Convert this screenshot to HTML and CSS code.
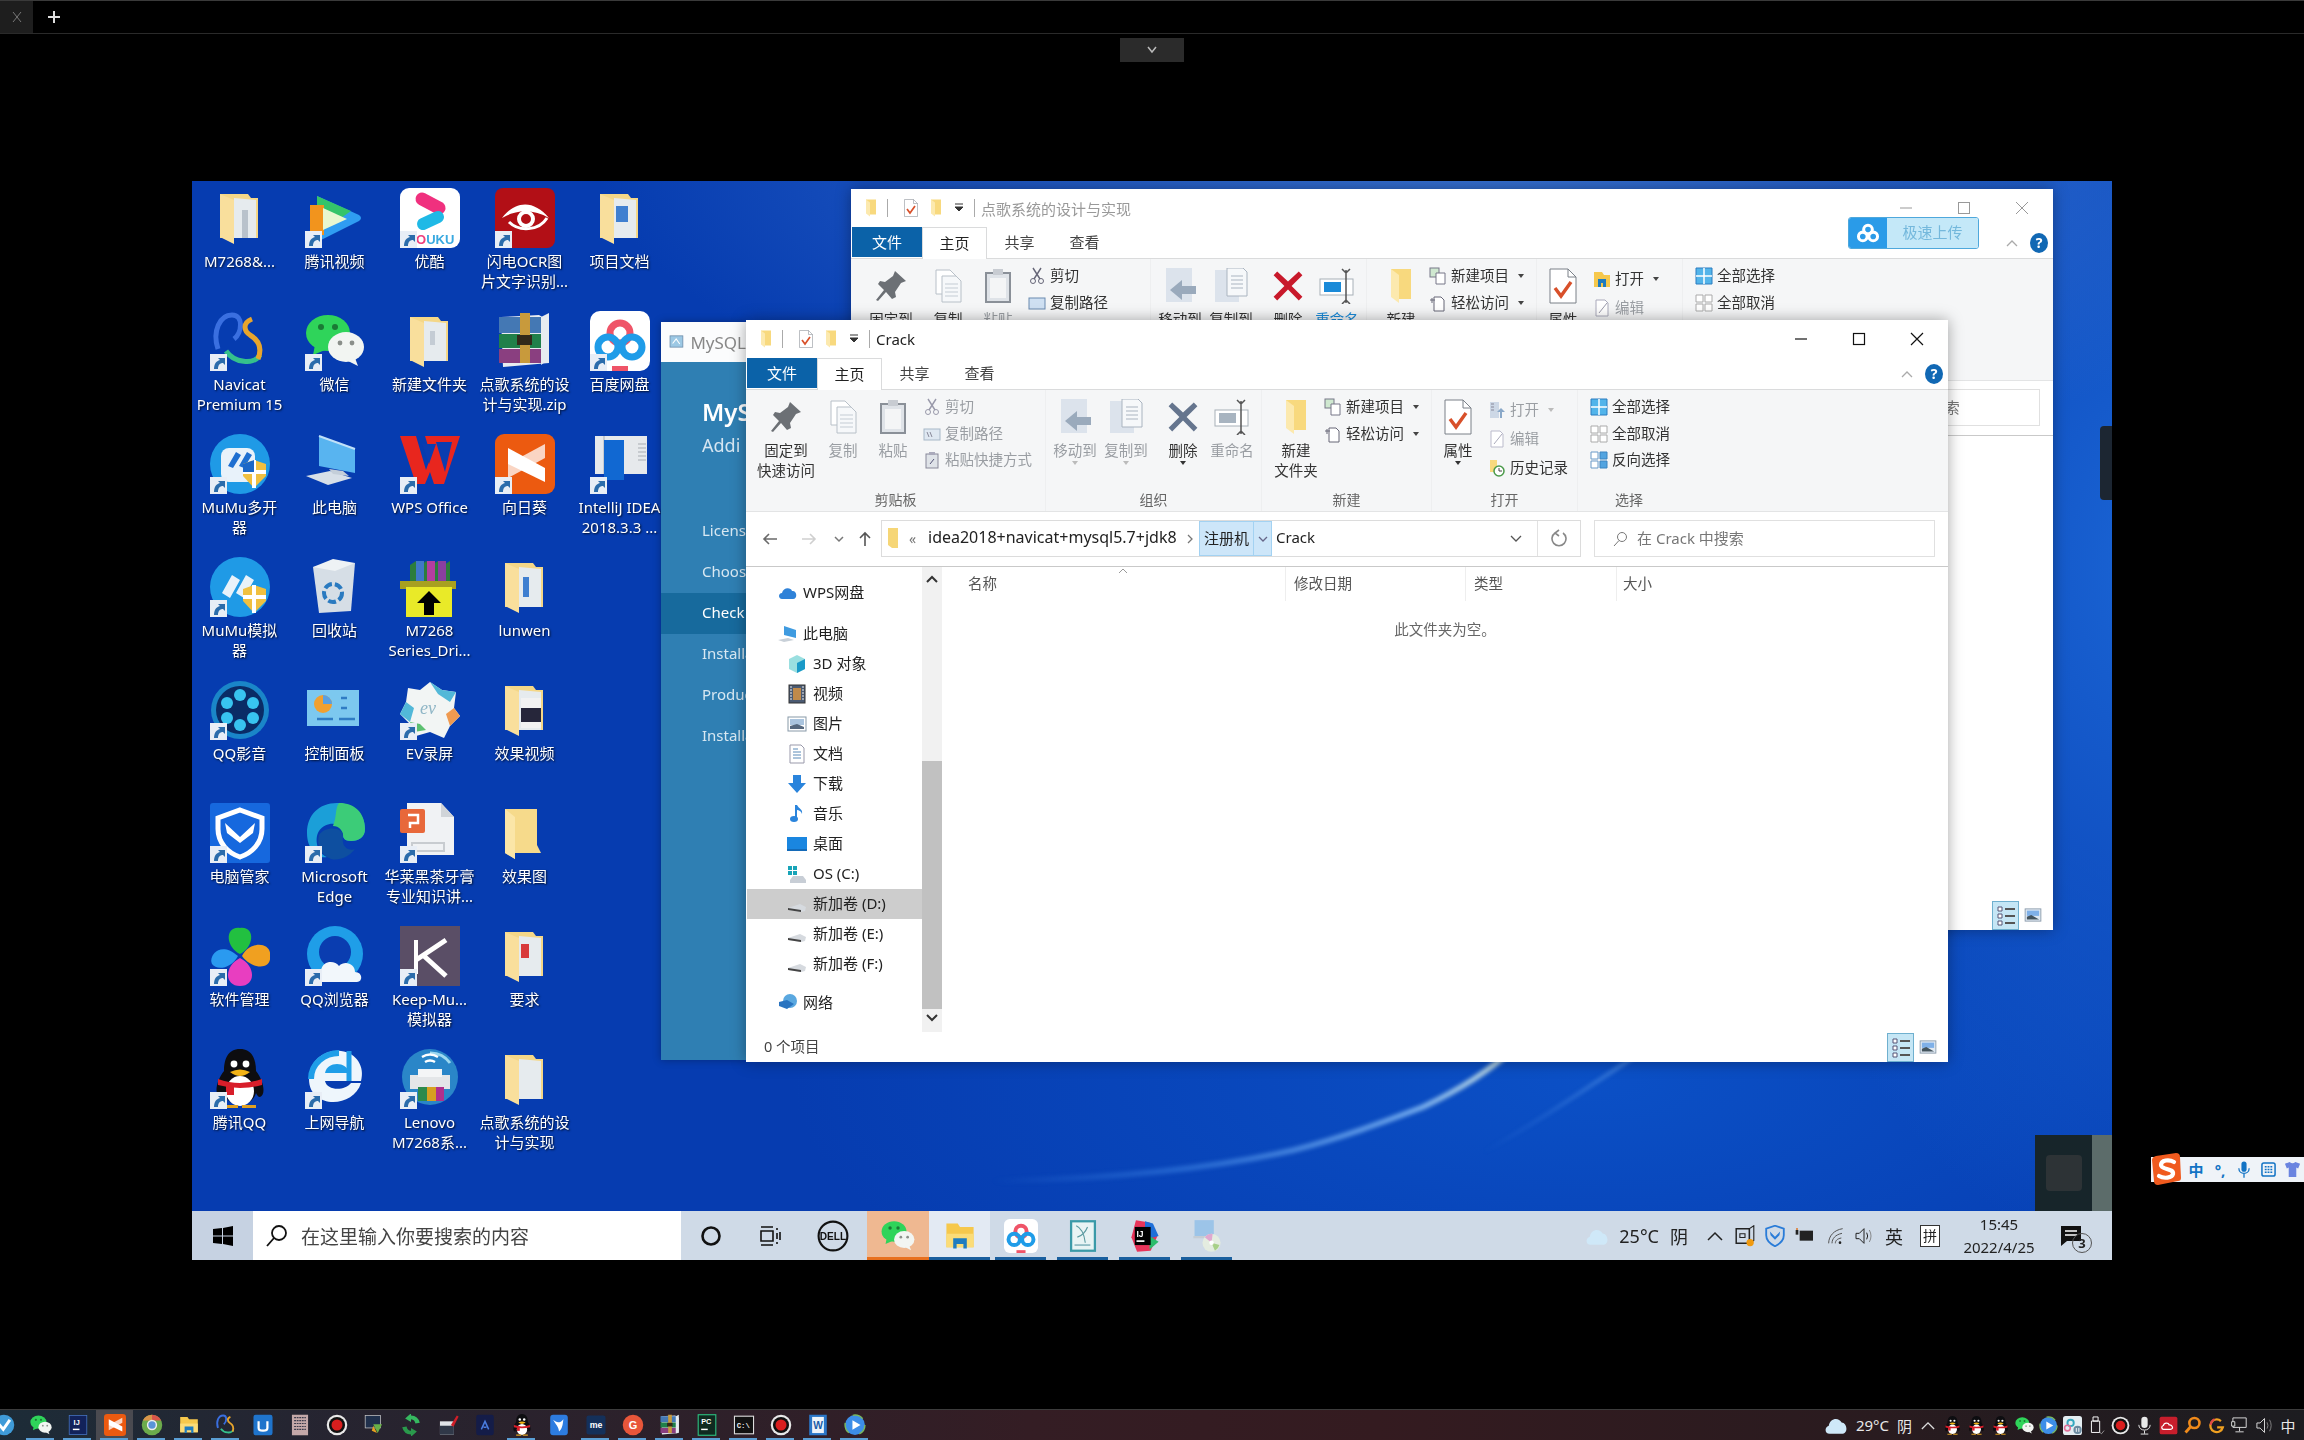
FILE: index.html
```html
<!DOCTYPE html>
<html lang="zh-CN">
<head>
    <meta charset="UTF-8">
    <title>远程桌面</title>
    <link rel="stylesheet" href="styles.css">
</head>
<body>
<svg class="sprite" width="0" height="0">
    <defs>
        <linearGradient id="streak-a" x1="0" x2="1" y1="0" y2="0">
            <stop offset="0" stop-color="#3f86e6" stop-opacity="0"/>
            <stop offset=".35" stop-color="#3f86e6" stop-opacity=".55"/>
            <stop offset=".8" stop-color="#7db4f2"/>
            <stop offset="1" stop-color="#dff0e0"/>
        </linearGradient>
        <linearGradient id="streak-b" x1="0" x2="1" y1="0" y2="0">
            <stop offset="0" stop-color="#3f86e6" stop-opacity="0"/>
            <stop offset="1" stop-color="#6ea8ee"/>
        </linearGradient>

        <!-- atalho -->
        <g id="sc"><rect width="17" height="17" fill="#e8eef6"/><path d="M4 15c0-5 2-8 6-9L8 4h7v7l-2-2c-3 0-5 2-5 6z" fill="#2b6cab"/></g>

        <!-- pastas -->
        <g id="i-folder"><path d="M10 6h32v36l4 8H20v6L10 50z" fill="#f6da8b"/><path d="M10 6l10 8v42l-10-6z" fill="#fbe6a8"/></g>
        <g id="i-folderdoc"><path d="M10 6h28l3 4h7v40H10z" fill="#f4d788"/><path d="M24 10l22 2v38H24z" fill="#e6ebee"/><path d="M10 6l14 6v44l-14-7z" fill="#f9df9c"/></g>

        <!-- apps -->
        <g id="i-tvideo"><path d="M12 8 54 27q4 3 0 6L12 54z" fill="#2f9df2"/><path d="M12 8l34 15-10 7-24-8z" fill="#35c46a"/><path d="M5 17h14v30H5z" fill="#f2941d"/><path d="M18 20l24 11-24 11z" fill="#e8f7d0"/></g>
        <g id="i-youku"><rect width="60" height="60" rx="9" fill="#fff"/><path d="M22 11l17 9" stroke="#f0307e" stroke-width="13" stroke-linecap="round"/><path d="M38 29l-15 7" stroke="#1fb9e6" stroke-width="12" stroke-linecap="round"/><text x="16" y="56" font-size="13" font-weight="700" fill="#ef3f7c" font-family="Liberation Sans">O<tspan fill="#39a9e0">UKU</tspan></text></g>
        <g id="i-ocr"><rect width="60" height="60" rx="8" fill="#b20f16"/><path d="M7 30c14-18 32-18 47 0-15-9-32-9-47 0z" fill="#fff"/><path d="M52 30c-8 13-28 14-38 4" stroke="#fff" stroke-width="3" fill="none"/><circle cx="31" cy="31" r="7" fill="none" stroke="#fff" stroke-width="4"/></g>
        <g id="i-navicat" fill="none" stroke-width="5"><path d="M8 38C2 20 10 4 22 4s10 18 2 24" stroke="#3a6fe0"/><path d="M16 40c8 12 28 14 34 4" stroke="#35c08c"/><path d="M42 8c-10 4-8 12-2 16 10 6 12 14 8 24" stroke="#e8a52c"/></g>
        <g id="i-wechat"><ellipse cx="23" cy="22" rx="22" ry="18" fill="#2fd45a"/><path d="M10 34l-2 10 12-5z" fill="#2fd45a"/><ellipse cx="41" cy="36" rx="18" ry="15" fill="#f2f5f2"/><path d="M50 47l3 8-10-5z" fill="#f2f5f2"/><circle cx="16" cy="16" r="3" fill="#1a7a35"/><circle cx="30" cy="16" r="3" fill="#1a7a35"/><circle cx="35" cy="32" r="2.4" fill="#8a8f8a"/><circle cx="47" cy="32" r="2.4" fill="#8a8f8a"/></g>
        <g id="i-rar"><path d="M6 6l38-2 10 6v42L8 56z" fill="#e8ecf0"/><path d="M4 6h42v16H4z" fill="#4478b4"/><path d="M4 23h42v14H4z" fill="#20804a"/><path d="M4 38h42v14H4z" fill="#8a3f80"/><path d="M46 6l8-4v46l-8 6z" fill="#e8ecf0"/><path d="M25 2h10v50H25z" fill="#c89a3c"/><path d="M22 24h15v10H22z" fill="#33291a"/></g>
        <g id="i-baidu"><rect width="60" height="60" rx="10" fill="#fff"/><g fill="none" stroke-width="7"><circle cx="30" cy="22" r="10" stroke="#ef5468"/><circle cx="18" cy="36" r="10" stroke="#1f9ce8"/><circle cx="42" cy="36" r="10" stroke="#1f9ce8"/></g><path d="M22 55h16v5H22z" fill="#ef5468"/></g>
        <g id="i-mumu"><circle cx="30" cy="30" r="30" fill="#1f9ae6"/><rect x="11" y="14" width="34" height="34" rx="8" fill="#e8f2fa"/><path d="M18 32l8-14 5 3-8 13zM29 32l8-14 5 3-8 13z" fill="#1e6fd0"/><path d="M33 30l11-4 12 4v12l-12 12-11-12z" fill="#f0c040"/><path d="M44 26v28M33 38h23" stroke="#fff" stroke-width="4"/><path d="M33 30l11-4v12H33z" fill="#1b67c8"/></g>
        <g id="i-mumu2"><circle cx="30" cy="30" r="30" fill="#1f9ae6"/><path d="M12 36l10-18 8 5-10 18zM26 36l10-18 8 5-10 18z" fill="#e8f2fa"/><path d="M33 32l11-4 12 4v12l-12 12-11-12z" fill="#f0c040"/><path d="M44 28v28M33 40h23" stroke="#fff" stroke-width="4"/></g>
        <g id="i-pc"><path d="M14 2l36 13v24L14 32z" fill="#58b4f0"/><path d="M14 2l36 13" stroke="#c0e0f8" stroke-width="2"/><path d="M1 42l24-5 22 7-24 7z" fill="#d7dfe8"/><path d="M24 35l14 2 6 5-16-2z" fill="#c4ced9"/></g>
        <g id="i-wps"><path d="M0 2h16l10 34 5-14-6-20h35L44 50H34l-4-12-5 12H16z" fill="#e8261e"/><path d="M22 10h14l-7 20z" fill="#0a3db0"/><path d="M36 8h16l-7 30z" fill="#0a3db0"/></g>
        <g id="i-sun"><rect width="60" height="60" rx="9" fill="#ec5a10"/><path d="M13 14l37 20v14L13 30z" fill="#fff"/><path d="M13 44l37-20V10L13 30z" fill="#fff" opacity=".75"/></g>
        <g id="i-idea"><path d="M5 2h52v38H5z" fill="#e6e9ec"/><path d="M14 2v38M48 10h8M48 14h8M48 18h8M48 22h8M48 26h8" stroke="#a8adb3" stroke-width="1"/><path d="M14 6h20v40H14z" fill="#1168d2"/></g>
        <g id="i-bin"><path d="M8 10l42-4-4 48-32 2z" fill="#d6dee6"/><path d="M8 10l20-8 22 4-20 8z" fill="#eef2f5"/><circle cx="28" cy="36" r="9" fill="none" stroke="#2a7ac0" stroke-width="4" stroke-dasharray="8 3"/></g>
        <g id="i-box"><path d="M10 26V8l6-4 6 4 4-4 6 4 6-4 6 4 6-4v24z" fill="#2c7d3c"/><path d="M16 4h8v22h-8z" fill="#3f78c8"/><path d="M27 4h8v22h-8z" fill="#b43ea0"/><path d="M38 4h8v22h-8z" fill="#8a3fa0"/><path d="M0 24h56v8H0z" fill="#a8a020"/><path d="M6 30h46v30H6z" fill="#e9ea28"/><path d="M29 34l12 12h-7v12H24V46h-7z" fill="#000"/></g>
        <g id="i-qqp"><circle cx="30" cy="30" r="29" fill="#1a86c8"/><circle cx="30" cy="30" r="24" fill="#0a2c66"/><g fill="#38c4f0"><circle cx="30" cy="15" r="6"/><circle cx="30" cy="45" r="6"/><circle cx="17" cy="23" r="6"/><circle cx="43" cy="23" r="6"/><circle cx="17" cy="38" r="6"/><circle cx="43" cy="38" r="6"/></g></g>
        <g id="i-panel"><rect x="2" y="10" width="52" height="36" fill="#7cc8ef"/><circle cx="18" cy="24" r="9" fill="#f0a030"/><path d="M18 24v-9a9 9 0 0 1 9 9z" fill="#5aa0e0"/><path d="M36 18h6M36 28h6M12 39h16M34 39h16" stroke="#2f7cc4" stroke-width="2.5"/></g>
        <g id="i-ev"><path d="M30 2l12 8 14 2-2 16 6 8-10 10-6 12-14-6-14 4-6-12L0 34l6-12 2-14 12 2z" fill="#f2f5f4"/><path d="M30 2l12 8 14 2-6 10-12-8zM6 22L0 34l10 8 4-14z" fill="#52b8d8"/><path d="M54 28l6 8-10 10-4-12z" fill="#ef9a50"/><path d="M14 52l-4-10 10 2 6 6z" fill="#5cc070"/><text x="20" y="34" font-size="18" font-style="italic" fill="#8fb6c6" font-family="Liberation Serif">ev</text></g>
        <g id="i-guard"><rect width="60" height="60" rx="3" fill="#1668de"/><path d="M30 7l22 8v11c0 14-10 24-22 28C18 50 8 40 8 26V15z" fill="none" stroke="#fff" stroke-width="5"/><path d="M15 20l15 14 15-14-2 10-13 10-13-10z" fill="#fff"/></g>
        <g id="i-edge"><path d="M2 30C2 12 14 0 32 0c16 0 28 10 28 26 0 8-6 12-14 12-6 0-8-3-8-6 4-12-16-16-24-4-5 8-2 22 8 26C12 56 2 46 2 30z" fill="#1b9fd8"/><path d="M34 0c16 0 26 10 26 26 0 8-6 12-14 12-6 0-8-3-8-6 0-4-4-9-10-9 4-10 2-18 6-23z" fill="#3ccc78"/><path d="M14 32c6-10 26-8 24 2-2 12 8 14 12 12-6 8-16 12-24 10-10-4-15-14-12-24z" fill="#0e4fa0"/></g>
        <g id="i-ppt"><path d="M7 0h34l13 14v38H7z" fill="#f0f2f4"/><path d="M41 0v14h13z" fill="#d0d4d8"/><rect y="6" width="25" height="24" rx="2" fill="#e8683a"/><path d="M8 12h10v8H10v5" fill="none" stroke="#fff" stroke-width="2.5"/><path d="M12 40h32v8H12z" fill="none" stroke="#c8ccd0" stroke-width="2"/></g>
        <g id="i-clover"><path d="M30 28C16 22 14 0 30 2c16-2 14 20 0 26z" fill="#22c040"/><path d="M28 30C10 14-2 30 2 38c4 6 18 6 26-8z" fill="#2a9af0"/><path d="M32 30c8-16 30-14 28 0 2 14-18 14-28 0z" fill="#f0a020"/><path d="M30 32C14 40 14 60 30 60c16 0 16-20 0-28z" fill="#e83ec0"/></g>
        <g id="i-qqb"><circle cx="30" cy="28" r="28" fill="#1f9ee8"/><circle cx="30" cy="26" r="16" fill="#0a3db0"/><path d="M14 56c-6 0-8-10 2-12 2-10 14-10 18-4 6-6 16-2 16 6 8 0 8 10 2 10z" fill="#f2f7fb"/></g>
        <g id="i-keep"><rect width="60" height="60" fill="#5a4e66"/><path d="M16 14v34" stroke="#fff" stroke-width="4"/><path d="M16 34L46 14M24 30l22 20" stroke="#fff" stroke-width="5" fill="none"/></g>
        <g id="i-qq"><path d="M30 0c12 0 16 10 16 22 8 10 10 24 4 26-2 0-3-2-4-4-2 8-10 12-16 12s-14-4-16-12c-1 2-2 4-4 4-6-2-4-16 4-26C14 10 18 0 30 0z" fill="#0d0d10"/><ellipse cx="30" cy="42" rx="14" ry="15" fill="#fff"/><circle cx="24" cy="15" r="3.4" fill="#fff"/><circle cx="36" cy="15" r="3.4" fill="#fff"/><path d="M20 23q10-5 20 0-10 8-20 0z" fill="#f2b316"/><path d="M8 30q22 8 44 0v6q-22 6-44 0z" fill="#d81e2a"/><path d="M16 34h8v12h-8z" fill="#d81e2a"/><path d="M14 56h14v3H14zM32 56h14v3H32z" fill="#e0a020"/></g>
        <g id="i-nav"><path d="M4 30C4 12 20 0 36 2c16 2 24 16 20 30H20c2 10 20 10 26 2h10C48 60 4 60 4 30z" fill="#eef6fc"/><path d="M20 24h24c-2-12-22-12-24 0z" fill="#1f9ee8"/><path d="M6 30C6 14 20 4 34 4" stroke="#1f9ee8" stroke-width="6" fill="none"/><path d="M44 2v30" stroke="#1f9ee8" stroke-width="5"/></g>
        <g id="i-printer"><circle cx="30" cy="28" r="28" fill="#2a86c8"/><path d="M30 4a24 24 0 0 1 20 10" stroke="#9cd8f0" stroke-width="3" fill="none"/><path d="M22 8q8-5 16 0M25 13q5-3 10 0" stroke="#fff" stroke-width="2.5" fill="none"/><path d="M10 26h40v14H10z" fill="#e4e6e8"/><path d="M18 20h24v8H18z" fill="#f4f5f6"/><path d="M18 38h26v14H18z" fill="#d6a020"/><path d="M18 38h9v14h-9z" fill="#2c8a4c"/><path d="M36 38h8v14h-8z" fill="#b0308c"/></g>

        <g id="i-dell"><circle cx="30" cy="30" r="27" fill="none" stroke="#111" stroke-width="4"/><text x="30" y="37" font-size="19" font-weight="700" text-anchor="middle" fill="#111" font-family="Liberation Sans">DELL</text></g>
        <g id="i-explorer"><path d="M6 8h20l4 6h24v36H6z" fill="#f6c84c"/><path d="M6 26h48v24H6z" fill="#fbdc78"/><path d="M18 34h24v18h-6v-8H24v8h-6z" fill="#1f7cc0"/></g>
        <g id="i-sql"><rect x="7" y="2" width="46" height="56" fill="#3a9aa8"/><rect x="11" y="6" width="38" height="48" fill="#e8f4f4"/><path d="M18 12c10 4 14 14 16 30M38 14C34 24 26 30 20 32" stroke="#5a9aa0" stroke-width="2" fill="none"/><path d="M15 46h28" stroke="#8ab8c0" stroke-width="3"/></g>
        <g id="i-ij"><path d="M14 2l24 4 14 24-12 26-24 2L6 32z" fill="#e8345a"/><path d="M30 4l14 4 10 22-24 6z" fill="#1f6fd8"/><path d="M38 30l16 10-16 14z" fill="#2cbc6c"/><rect x="12" y="14" width="28" height="32" fill="#000"/><text x="15" y="32" font-size="15" font-weight="700" fill="#fff" font-family="Liberation Sans">IJ</text><path d="M15 39h14" stroke="#fff" stroke-width="3"/></g>
        <g id="i-disc"><path d="M8 2h34v28H8z" fill="#9cc4e8"/><path d="M6 30h38v4H6z" fill="#c4ccd4"/><circle cx="38" cy="42" r="16" fill="#e4ece0"/><path d="M38 42L26 32a16 16 0 0 1 14-6z" fill="#e0a8d0"/><path d="M38 42l14 4a16 16 0 0 1-8 10z" fill="#a8d088"/><circle cx="38" cy="42" r="4" fill="#fff"/></g>

        <g id="h-check"><circle cx="30" cy="30" r="28" fill="#3f9bd8"/><path d="M16 28l12 14 18-26" stroke="#fff" stroke-width="8" fill="none"/></g>
        <g id="h-ij"><rect x="6" y="4" width="48" height="52" fill="#12225a" stroke="#4878c8" stroke-width="2"/><text x="18" y="30" font-size="20" font-weight="700" fill="#fff" font-family="Liberation Sans">IJ</text><path d="M16 42h18" stroke="#fff" stroke-width="4"/></g>
        <g id="h-chrome"><circle cx="30" cy="30" r="28" fill="#6cab4c"/><path d="M30 2a28 28 0 0 1 25 16H30z" fill="#d9564a"/><path d="M5 18a28 28 0 0 1 25-16v16z" fill="#d9964a"/><circle cx="30" cy="30" r="12" fill="#5a94d8" stroke="#eee" stroke-width="4"/></g>
        <g id="h-blue"><rect x="4" y="2" width="52" height="56" rx="6" fill="#1f74cc"/><path d="M18 20v18c0 10 24 10 24 0V20" stroke="#fff" stroke-width="6" fill="none"/></g>
        <g id="h-note"><rect x="8" y="2" width="44" height="56" fill="#c4a8a8"/><path d="M14 10h32M14 18h32M14 26h32M14 34h32M14 42h32" stroke="#3a3a4a" stroke-width="3" stroke-dasharray="5 2"/></g>
        <g id="h-rec"><circle cx="30" cy="30" r="28" fill="#e8e8e8"/><circle cx="30" cy="30" r="22" fill="#111"/><circle cx="30" cy="30" r="15" fill="#d81e1e"/></g>
        <g id="h-cmdc"><rect x="6" y="4" width="42" height="34" fill="#20304c" stroke="#c8c8c8" stroke-width="2"/><path d="M28 28l24 0-12 24z" fill="#68b048"/><path d="M28 32l10 20-14-6z" fill="#e8a020"/></g>
        <g id="h-sync"><path d="M30 4a26 26 0 0 1 24 20l-12 2a14 14 0 0 0-12-12v8L14 12 30-2z" fill="#36b860"/><path d="M30 56A26 26 0 0 1 6 36l12-2a14 14 0 0 0 12 12v-8l16 10-16 14z" fill="#2a9a4c"/></g>
        <g id="h-pen"><rect x="8" y="20" width="38" height="36" fill="#e0e4e8"/><rect x="8" y="32" width="38" height="24" fill="#303848"/><path d="M38 30L54 4l5 3-14 28z" fill="#d01e28"/></g>
        <g id="h-arc"><rect x="6" y="2" width="48" height="56" rx="6" fill="#141c48"/><path d="M20 42l10-22 10 22M26 36h8" stroke="#4a7ce0" stroke-width="4" fill="none"/></g>
        <g id="h-bird"><rect x="6" y="2" width="48" height="56" rx="8" fill="#2d7ce0"/><path d="M14 16c10 8 18 10 28-2-2 14-2 24-12 34 0-12-10-20-16-32z" fill="#fff"/></g>
        <g id="h-me"><rect x="4" y="4" width="52" height="52" rx="6" fill="#14305a"/><text x="30" y="38" font-size="24" font-weight="700" text-anchor="middle" fill="#fff" font-family="Liberation Sans">me</text></g>
        <g id="h-g"><circle cx="30" cy="30" r="28" fill="#e8563a"/><text x="30" y="40" font-size="30" font-weight="700" text-anchor="middle" fill="#fff" font-family="Liberation Sans">G</text></g>
        <g id="h-pc"><rect x="6" y="2" width="48" height="56" fill="#0f2a20" stroke="#2cc080" stroke-width="3"/><text x="14" y="28" font-size="20" font-weight="700" fill="#fff" font-family="Liberation Sans">PC</text><path d="M14 42h18" stroke="#fff" stroke-width="4"/></g>
        <g id="h-term"><rect x="4" y="6" width="52" height="48" fill="#111" stroke="#ddd" stroke-width="3"/><text x="10" y="38" font-size="20" font-weight="700" fill="#eee" font-family="Liberation Mono">C:\</text></g>
        <g id="h-word"><rect x="6" y="2" width="48" height="56" fill="#2a76c8"/><rect x="14" y="8" width="32" height="44" fill="#eef4fa"/><text x="30" y="40" font-size="28" font-weight="700" text-anchor="middle" fill="#1a5ca8" font-family="Liberation Sans">W</text></g>
        <g id="h-play"><circle cx="30" cy="30" r="27" fill="#3d8ee8"/><circle cx="30" cy="30" r="27" fill="none" stroke="#7ab860" stroke-width="4" stroke-dasharray="30 30"/><path d="M23 17l22 13-22 13z" fill="#fff"/></g>
        <g id="h-baidup"><rect width="60" height="60" rx="8" fill="#e4eef2"/><circle cx="24" cy="22" r="10" fill="none" stroke="#35a8c0" stroke-width="6"/><circle cx="14" cy="38" r="9" fill="none" stroke="#e07098" stroke-width="5"/><circle cx="46" cy="44" r="13" fill="#6a8aa0"/><path d="M42 38v12M50 38v12" stroke="#fff" stroke-width="3"/></g>
        <g id="h-usb"><path d="M14 16h26v36H14z" fill="none" stroke="#fff" stroke-width="3"/><path d="M19 3h16v13H19z" fill="none" stroke="#fff" stroke-width="3"/><path d="M38 50l8 6 8-10" fill="none" stroke="#ccc" stroke-width="2"/></g>
        <g id="h-mic"><rect x="20" y="2" width="20" height="36" rx="10" fill="#e8e8e8"/><path d="M12 28c0 22 36 22 36 0M30 46v10M18 57h24" stroke="#e8e8e8" stroke-width="3" fill="none"/></g>
        <g id="h-rcloud"><rect x="2" y="2" width="56" height="56" rx="6" fill="#c81e2c"/><path d="M14 42c-6 0-8-10 0-12 2-10 16-10 18-2 10-2 16 14 4 14z" fill="none" stroke="#fff" stroke-width="4"/></g>
        <g id="h-mag"><circle cx="36" cy="22" r="16" fill="none" stroke="#f08a1a" stroke-width="8"/><path d="M24 34L8 52" stroke="#f08a1a" stroke-width="9"/></g>
        <g id="h-gc"><path d="M44 16A20 20 0 1 0 50 36H32" fill="none" stroke="#f0a020" stroke-width="7"/><path d="M24 10a20 20 0 0 0-12 18" fill="none" stroke="#e04848" stroke-width="7"/></g>
        <g id="h-net"><path d="M6 6h42v30H6z" fill="none" stroke="#ddd" stroke-width="3"/><path d="M2 18h10v14H2z" fill="#111" stroke="#ddd" stroke-width="3"/><path d="M27 36v12M14 50h26" stroke="#ddd" stroke-width="3"/></g>
        <g id="h-spk"><path d="M6 22h10L30 8v44L16 38H6z" fill="none" stroke="#ddd" stroke-width="3"/><path d="M38 20q6 10 0 20M46 12q10 18 0 36" fill="none" stroke="#999" stroke-width="2.5"/></g>
        <g id="h-cloud"><path d="M14 52C2 52 0 36 12 32 14 14 36 8 44 24c14 0 18 28 0 28z" fill="#cfe8f8"/></g>

        <!-- bandeja remota -->
        <g id="t-pipe"><path d="M6 10h36v40H6z" fill="none" stroke="#222" stroke-width="4"/><path d="M42 10l12-8v40l-12 8z" fill="none" stroke="#222" stroke-width="3"/><circle cx="44" cy="48" r="10" fill="#f09a10"/><path d="M16 24h14v10H16z" fill="none" stroke="#222" stroke-width="3"/></g>
        <g id="t-shield"><path d="M30 2l24 8v18c0 14-12 24-24 30C18 52 6 42 6 28V10z" fill="none" stroke="#2a7cd8" stroke-width="5"/><path d="M16 18l14 14 14-14-2 10-12 12-12-12z" fill="#2a7cd8"/></g>
        <g id="t-batt"><rect x="14" y="14" width="40" height="30" fill="#222"/><path d="M2 12h8v14H2z" fill="#222"/><path d="M6 6v6" stroke="#e06a10" stroke-width="4"/></g>
        <g id="t-wifi" fill="none" stroke="#555"><path d="M8 52C8 30 24 12 50 8" stroke-width="3"/><path d="M18 52c0-14 10-26 30-30" stroke-width="3"/><path d="M28 52c0-8 6-14 18-16" stroke-width="3"/><circle cx="42" cy="50" r="4" fill="#222" stroke="none"/></g>
        <g id="t-spk"><path d="M6 22h10L30 8v44L16 38H6z" fill="none" stroke="#222" stroke-width="3"/><path d="M38 20q6 10 0 20" fill="none" stroke="#222" stroke-width="3"/><path d="M46 12q10 18 0 36" fill="none" stroke="#777" stroke-width="2.5"/></g>

        <!-- faixa de opções -->
        <g id="r-pin"><path d="M22 3l11 10-5 2-6 9 1 5-4 2-6-7-8 9-2-1 8-10-6-6 2-3 5 1 8-6z" fill="#6c7075"/></g>
        <g id="r-copy"><path d="M6 2h14l6 6v18H6z" fill="#fff" stroke="#b8c0c8"/><path d="M12 8h14l5 5v21H12z" fill="#f6f8fa" stroke="#b8c0c8"/><path d="M15 16h13M15 20h13M15 24h13M15 28h13" stroke="#c4ccd4"/></g>
        <g id="r-paste"><rect x="6" y="5" width="24" height="29" fill="#dfe3e8" stroke="#8a9098" stroke-width="2"/><rect x="13" y="1" width="10" height="6" fill="#c8ccd2"/><rect x="10" y="10" width="16" height="20" fill="#f4f5f6"/></g>
        <g id="r-move"><path d="M4 0h26v34H4z" fill="#dce3ec"/><path d="M16 18h18v8H16z" fill="#9aaabc"/><path d="M20 12L8 22l12 10z" fill="#9aaabc"/></g>
        <g id="r-copyto"><path d="M2 2h24v32H2z" fill="#dce3ec"/><path d="M14 0h16l4 4v24H14z" fill="#f6f8fa" stroke="#aab4c0"/><path d="M18 8h12M18 12h12M18 16h12M18 20h12" stroke="#aab4c0"/></g>
        <g id="r-del"><path d="M6 4l12 11L30 4l4 4-12 12 12 12-4 4-12-12L6 36l-4-4 12-12L2 8z" fill="currentColor"/></g>
        <g id="r-ren"><rect x="1" y="11" width="33" height="16" fill="#fff" stroke="#a8b0b8"/><rect x="5" y="14" width="17" height="10" fill="currentColor"/><path d="M27 2v33M23 1l4 4 4-4M23 36l4-4 4 4" stroke="#555" fill="none" stroke-width="1.5"/></g>
        <g id="r-newf"><path d="M8 1h20v30H14l-6-4z" fill="#f8d97e"/><path d="M8 1l8 6v28l-8-6z" fill="#fce9ae"/></g>
        <g id="r-prop"><path d="M5 1h18l8 8v26H5z" fill="#fff" stroke="#7a8088"/><path d="M23 1v8h8" fill="none" stroke="#7a8088"/><path d="M10 20l6 8 10-14" fill="none" stroke="#d8502a" stroke-width="3.4"/></g>

        <!-- modos de exibição -->
        <g id="v-details"><path d="M4 4h4v4H4zM4 11h4v4H4zM4 18h4v4H4z" fill="#fff" stroke="#557"/><path d="M11 6h10M11 13h10M11 20h10" stroke="#555" stroke-width="2"/></g>
        <g id="v-large"><rect x="1" y="1" width="18" height="14" fill="#dfe8f2" stroke="#8899a8"/><path d="M3 3h14v6H3z" fill="#7fb0e8"/><path d="M3 13v-3l5-2 9 5z" fill="#44545e"/></g>
    </defs>
</svg>

<div class="page">
    <div class="tabbar">
        <div class="tab-x"><svg viewBox="0 0 12 12" width="12" height="12"><path d="M2 1l8 10M10 1L2 11" stroke="#777"/></svg></div>
        <svg class="tab-plus" viewBox="0 0 14 14" width="14" height="14"><path d="M7 1v12M1 7h12" stroke="#ddd" stroke-width="2"/></svg>
    </div>
    <div class="drop-btn"><svg viewBox="0 0 12 8" width="12" height="8"><path d="M2 1l4 5 4-5" fill="none" stroke="#bbb" stroke-width="1.5"/></svg></div>

    <div class="stage">
        <div class="screen">
            <div class="wallpaper">
                <svg class="streaks" viewBox="0 0 1920 1030" width="1920" height="1030">
                    <path d="M800 1000c110-2 210-10 302-31 50-13 92-29 129-43 38-18 66-36 95-62" stroke="url(#streak-a)" stroke-width="5" fill="none"/>
                    <path d="M1290 972c58-32 112-70 170-108" stroke="url(#streak-b)" stroke-width="2.500" fill="none"/>
                </svg>

                <div class="desktop">
                    <div class="d-item"><svg class="d-ico" viewBox="0 0 60 60"><use href="#i-folderdoc"/><path d="M32 22h6v28h-6z" fill="#b9c2cb"/></svg><div class="d-label">M7268&amp;...</div></div>
                    <div class="d-item"><svg class="d-ico" viewBox="0 0 60 60"><use href="#i-tvideo"/><use href="#sc" y="43"/></svg><div class="d-label">腾讯视频</div></div>
                    <div class="d-item"><svg class="d-ico" viewBox="0 0 60 60"><use href="#i-youku"/><use href="#sc" y="43"/></svg><div class="d-label">优酷</div></div>
                    <div class="d-item"><svg class="d-ico" viewBox="0 0 60 60"><use href="#i-ocr"/><use href="#sc" y="43"/></svg><div class="d-label">闪电OCR图<br>片文字识别...</div></div>
                    <div class="d-item"><svg class="d-ico" viewBox="0 0 60 60"><use href="#i-folderdoc"/><path d="M26 18h12v16H26z" fill="#3f7fd0"/></svg><div class="d-label">项目文档</div></div>

                    <div class="d-item"><svg class="d-ico" viewBox="0 0 60 60"><use href="#i-navicat"/><use href="#sc" y="43"/></svg><div class="d-label">Navicat<br>Premium 15</div></div>
                    <div class="d-item"><svg class="d-ico" viewBox="0 0 60 60"><use href="#i-wechat"/><use href="#sc" y="43"/></svg><div class="d-label">微信</div></div>
                    <div class="d-item"><svg class="d-ico" viewBox="0 0 60 60"><use href="#i-folderdoc"/><path d="M30 20h5v14h-5z" fill="#c4ccd4"/></svg><div class="d-label">新建文件夹</div></div>
                    <div class="d-item"><svg class="d-ico" viewBox="0 0 60 60"><use href="#i-rar"/></svg><div class="d-label">点歌系统的设<br>计与实现.zip</div></div>
                    <div class="d-item"><svg class="d-ico" viewBox="0 0 60 60"><use href="#i-baidu"/><use href="#sc" y="43"/></svg><div class="d-label">百度网盘</div></div>

                    <div class="d-item"><svg class="d-ico" viewBox="0 0 60 60"><use href="#i-mumu"/><use href="#sc" y="43"/></svg><div class="d-label">MuMu多开<br>器</div></div>
                    <div class="d-item"><svg class="d-ico" viewBox="0 0 60 60"><use href="#i-pc"/></svg><div class="d-label">此电脑</div></div>
                    <div class="d-item"><svg class="d-ico" viewBox="0 0 60 60"><use href="#i-wps"/><use href="#sc" y="43"/></svg><div class="d-label">WPS Office</div></div>
                    <div class="d-item"><svg class="d-ico" viewBox="0 0 60 60"><use href="#i-sun"/><use href="#sc" y="43"/></svg><div class="d-label">向日葵</div></div>
                    <div class="d-item"><svg class="d-ico" viewBox="0 0 60 60"><use href="#i-idea"/><use href="#sc" y="43"/></svg><div class="d-label">IntelliJ IDEA<br>2018.3.3 ...</div></div>

                    <div class="d-item row-start"><svg class="d-ico" viewBox="0 0 60 60"><use href="#i-mumu2"/><use href="#sc" y="43"/></svg><div class="d-label">MuMu模拟<br>器</div></div>
                    <div class="d-item"><svg class="d-ico" viewBox="0 0 60 60"><use href="#i-bin"/></svg><div class="d-label">回收站</div></div>
                    <div class="d-item"><svg class="d-ico" viewBox="0 0 60 60"><use href="#i-box"/></svg><div class="d-label">M7268<br>Series_Dri...</div></div>
                    <div class="d-item"><svg class="d-ico" viewBox="0 0 60 60"><use href="#i-folderdoc"/><path d="M28 20h6v20h-6z" fill="#3f7fd0"/></svg><div class="d-label">lunwen</div></div>

                    <div class="d-item row-start"><svg class="d-ico" viewBox="0 0 60 60"><use href="#i-qqp"/><use href="#sc" y="43"/></svg><div class="d-label">QQ影音</div></div>
                    <div class="d-item"><svg class="d-ico" viewBox="0 0 60 60"><use href="#i-panel"/></svg><div class="d-label">控制面板</div></div>
                    <div class="d-item"><svg class="d-ico" viewBox="0 0 60 60"><use href="#i-ev"/><use href="#sc" y="43"/></svg><div class="d-label">EV录屏</div></div>
                    <div class="d-item"><svg class="d-ico" viewBox="0 0 60 60"><use href="#i-folderdoc"/><path d="M26 18h20v30H26z" fill="#f2f2f2"/><path d="M26 28h20v14H26z" fill="#26263a"/></svg><div class="d-label">效果视频</div></div>

                    <div class="d-item row-start"><svg class="d-ico" viewBox="0 0 60 60"><use href="#i-guard"/><use href="#sc" y="43"/></svg><div class="d-label">电脑管家</div></div>
                    <div class="d-item"><svg class="d-ico" viewBox="0 0 60 60"><use href="#i-edge"/><use href="#sc" y="43"/></svg><div class="d-label">Microsoft<br>Edge</div></div>
                    <div class="d-item"><svg class="d-ico" viewBox="0 0 60 60"><use href="#i-ppt"/><use href="#sc" y="43"/></svg><div class="d-label">华莱黑茶牙膏<br>专业知识讲...</div></div>
                    <div class="d-item"><svg class="d-ico" viewBox="0 0 60 60"><use href="#i-folder"/></svg><div class="d-label">效果图</div></div>

                    <div class="d-item row-start"><svg class="d-ico" viewBox="0 0 60 60"><use href="#i-clover"/><use href="#sc" y="43"/></svg><div class="d-label">软件管理</div></div>
                    <div class="d-item"><svg class="d-ico" viewBox="0 0 60 60"><use href="#i-qqb"/><use href="#sc" y="43"/></svg><div class="d-label">QQ浏览器</div></div>
                    <div class="d-item"><svg class="d-ico" viewBox="0 0 60 60"><use href="#i-keep"/><use href="#sc" y="43"/></svg><div class="d-label">Keep-Mu...<br>模拟器</div></div>
                    <div class="d-item"><svg class="d-ico" viewBox="0 0 60 60"><use href="#i-folderdoc"/><path d="M26 18h8v14h-8z" fill="#d83a3a"/></svg><div class="d-label">要求</div></div>

                    <div class="d-item row-start"><svg class="d-ico" viewBox="0 0 60 60"><use href="#i-qq"/><use href="#sc" y="43"/></svg><div class="d-label">腾讯QQ</div></div>
                    <div class="d-item"><svg class="d-ico" viewBox="0 0 60 60"><use href="#i-nav"/><use href="#sc" y="43"/></svg><div class="d-label">上网导航</div></div>
                    <div class="d-item"><svg class="d-ico" viewBox="0 0 60 60"><use href="#i-printer"/><use href="#sc" y="43"/></svg><div class="d-label">Lenovo<br>M7268系...</div></div>
                    <div class="d-item"><svg class="d-ico" viewBox="0 0 60 60"><use href="#i-folderdoc"/></svg><div class="d-label">点歌系统的设<br>计与实现</div></div>
                </div>

                <!-- janela: instalador (quase toda coberta) -->
                <div class="installer">
                    <div class="inst-title"><svg viewBox="0 0 60 60" width="22" height="22"><rect x="4" y="6" width="50" height="44" fill="#9cc8e4" stroke="#6a8aa8" stroke-width="3"/><path d="M14 36l14-18 14 20" stroke="#fff" stroke-width="4" fill="none"/></svg><span>MySQL</span></div>
                    <div class="inst-body">
                        <div class="inst-head">MyS</div>
                        <div class="inst-sub">Addi</div>
                        <div class="inst-step">Licens</div>
                        <div class="inst-step">Choos</div>
                        <div class="inst-step on">Check</div>
                        <div class="inst-step">Installa</div>
                        <div class="inst-step">Produc</div>
                        <div class="inst-step">Installa</div>
                    </div>
                </div>

                <!-- janela de trás -->
                <div class="win win-back">
                    <div class="win-title">
                        <svg class="q-folder" viewBox="0 0 36 36"><use href="#r-newf"/></svg>
                        <span class="q-sep"></span>
                        <svg class="q-check" viewBox="0 0 36 36"><use href="#r-prop"/></svg>
                        <svg class="q-folder2" viewBox="0 0 36 36"><use href="#r-newf"/></svg>
                        <svg class="q-arrow" viewBox="0 0 10 10"><path d="M1 4h8L5 8zM1 1h8" fill="#333" stroke="#333"/></svg>
                        <span class="q-sep2"></span>
                        <span class="win-name muted">点歌系统的设计与实现</span>
                        <div class="win-ctrl">
                            <div class="ctl"><svg viewBox="0 0 14 14" width="14" height="14"><path d="M1 7h12" stroke="#999"/></svg></div>
                            <div class="ctl"><svg viewBox="0 0 14 14" width="14" height="14"><rect x="1.5" y="1.5" width="11" height="11" fill="none" stroke="#999"/></svg></div>
                            <div class="ctl"><svg viewBox="0 0 14 14" width="14" height="14"><path d="M1 1l12 12M13 1L1 13" stroke="#999"/></svg></div>
                        </div>
                    </div>
                    <div class="win-tabs">
                        <div class="t-file">文件</div><div class="t-tab t-on">主页</div><div class="t-tab">共享</div><div class="t-tab">查看</div>
                        <div class="t-help"><svg viewBox="0 0 12 8" width="12" height="8"><path d="M1 7l5-5 5 5" fill="none" stroke="#aaa" stroke-width="1.3"/></svg><span class="help-q">?</span></div>
                    </div>
                    <div class="ribbon">
                        <div class="rb-group g1"><div class="rb-tools">
                            <div class="rb-big w-pin"><svg class="rb-ico" viewBox="0 0 36 36"><use href="#r-pin"/></svg><span>固定到</span></div>
                            <div class="rb-big w-50"><svg class="rb-ico" viewBox="0 0 36 36"><use href="#r-copy"/></svg><span>复制</span></div>
                            <div class="rb-big w-50 off"><svg class="rb-ico" viewBox="0 0 36 36"><use href="#r-paste"/></svg><span>粘贴</span></div>
                            <div class="rb-col c-clip">
                                <div class="rb-row"><svg class="rb-sm" viewBox="0 0 18 18"><path d="M5 1l7 11M13 1L6 12" stroke="#667" stroke-width="1.4"/><circle cx="5" cy="14" r="2.5" fill="none" stroke="#667"/><circle cx="13" cy="14" r="2.5" fill="none" stroke="#667"/></svg><span>剪切</span></div>
                                <div class="rb-row"><svg class="rb-sm" viewBox="0 0 18 18"><rect x="1" y="4" width="16" height="11" fill="#cfe0f2" stroke="#6a8ab0"/></svg><span>复制路径</span></div>
                            </div>
                        </div></div>
                        <div class="rb-group g2"><div class="rb-tools">
                            <div class="rb-big w-move"><svg class="rb-ico" viewBox="0 0 36 36"><use href="#r-move"/></svg><span>移动到</span></div>
                            <div class="rb-big w-50"><svg class="rb-ico" viewBox="0 0 36 36"><use href="#r-copyto"/></svg><span>复制到</span></div>
                            <div class="rb-big w-del red"><svg class="rb-ico" viewBox="0 0 36 40"><use href="#r-del"/></svg><span>删除</span></div>
                            <div class="rb-big w-50 blue"><svg class="rb-ico" viewBox="0 0 36 36"><use href="#r-ren"/></svg><span>重命名</span></div>
                        </div></div>
                        <div class="rb-group g3"><div class="rb-tools">
                            <div class="rb-big w-new"><svg class="rb-ico" viewBox="0 0 36 36"><use href="#r-newf"/></svg><span>新建</span></div>
                            <div class="rb-col c-new">
                                <div class="rb-row"><svg class="rb-sm" viewBox="0 0 18 18"><rect x="1" y="1" width="9" height="9" fill="#cfe8d0" stroke="#778"/><path d="M7 6h9v11H7z" fill="#fff" stroke="#778"/></svg><span>新建项目</span><i class="caret"></i></div>
                                <div class="rb-row"><svg class="rb-sm" viewBox="0 0 18 18"><path d="M5 3h7l3 3v11H5z" fill="#fff" stroke="#667"/><path d="M1 6h5M3 4v5" stroke="#667"/></svg><span>轻松访问</span><i class="caret"></i></div>
                            </div>
                        </div></div>
                        <div class="rb-group g4"><div class="rb-tools">
                            <div class="rb-big w-prop"><svg class="rb-ico" viewBox="0 0 36 36"><use href="#r-prop"/></svg><span>属性</span></div>
                            <div class="rb-col c-open open-col">
                                <div class="rb-row"><svg class="rb-sm" viewBox="0 0 18 18"><path d="M1 2h8l2 3h6v12H1z" fill="#f6c84c"/><path d="M5 9h8v8h-3v-4H8v4H5z" fill="#1f7cc0"/></svg><span>打开</span><i class="caret"></i></div>
                                <div class="rb-row off"><svg class="rb-sm" viewBox="0 0 18 18"><path d="M3 1h9l3 3v13H3z" fill="#fff" stroke="#aab"/><path d="M6 14L14 4" stroke="#99a"/></svg><span>编辑</span></div>
                            </div>
                        </div></div>
                        <div class="rb-group g5"><div class="rb-tools">
                            <div class="rb-col c-sel">
                                <div class="rb-row"><svg class="rb-sm" viewBox="0 0 18 18"><path d="M1 1h16v16H1z" fill="#52b4ea" stroke="#2a7cc0"/><path d="M9 1v16M1 9h16" stroke="#fff" stroke-width="1.5"/></svg><span>全部选择</span></div>
                                <div class="rb-row"><svg class="rb-sm" viewBox="0 0 18 18"><path d="M1 1h7v7H1zM10 1h7v7h-7zM1 10h7v7H1zM10 10h7v7h-7z" fill="#fff" stroke="#aaa"/></svg><span>全部取消</span></div>
                            </div>
                        </div></div>
                    </div>
                    <div class="addr-row">
                        <div class="addr-box"></div>
                        <div class="search-box"><svg class="search-ico" viewBox="0 0 16 16"><circle cx="10" cy="6" r="4.5" fill="none" stroke="#777"/><path d="M7 9.5L2 15" stroke="#777"/></svg><span>在 点歌系统的设计与实现 中搜索</span></div>
                    </div>
                    <div class="win-main"></div>
                    <div class="win-status">
                        <div class="views"><span class="view-on"><svg viewBox="0 0 24 24" width="24" height="24"><use href="#v-details"/></svg></span><svg viewBox="0 0 20 16" width="18" height="14"><use href="#v-large"/></svg></div>
                    </div>
                    <div class="upload-btn"><span class="up-logo"><svg viewBox="0 0 60 60" width="26" height="26"><g fill="none" stroke="#fff" stroke-width="7"><circle cx="30" cy="22" r="10"/><circle cx="18" cy="38" r="10"/><circle cx="42" cy="38" r="10"/></g></svg></span><span class="up-text">极速上传</span></div>
                </div>

                <!-- janela da frente -->
                <div class="win win-front">
                    <div class="win-title">
                        <svg class="q-folder" viewBox="0 0 36 36"><use href="#r-newf"/></svg>
                        <span class="q-sep"></span>
                        <svg class="q-check" viewBox="0 0 36 36"><use href="#r-prop"/></svg>
                        <svg class="q-folder2" viewBox="0 0 36 36"><use href="#r-newf"/></svg>
                        <svg class="q-arrow" viewBox="0 0 10 10"><path d="M1 4h8L5 8zM1 1h8" fill="#333" stroke="#333"/></svg>
                        <span class="q-sep2"></span>
                        <span class="win-name">Crack</span>
                        <div class="win-ctrl">
                            <div class="ctl"><svg viewBox="0 0 14 14" width="14" height="14"><path d="M1 7h12" stroke="#111" stroke-width="1.2"/></svg></div>
                            <div class="ctl"><svg viewBox="0 0 14 14" width="14" height="14"><rect x="1.5" y="1.5" width="11" height="11" fill="none" stroke="#111" stroke-width="1.2"/></svg></div>
                            <div class="ctl"><svg viewBox="0 0 14 14" width="14" height="14"><path d="M1 1l12 12M13 1L1 13" stroke="#111" stroke-width="1.2"/></svg></div>
                        </div>
                    </div>
                    <div class="win-tabs">
                        <div class="t-file">文件</div><div class="t-tab t-on">主页</div><div class="t-tab">共享</div><div class="t-tab">查看</div>
                        <div class="t-help"><svg viewBox="0 0 12 8" width="12" height="8"><path d="M1 7l5-5 5 5" fill="none" stroke="#aaa" stroke-width="1.3"/></svg><span class="help-q">?</span></div>
                    </div>
                    <div class="ribbon">
                        <div class="rb-group g1"><div class="rb-tools">
                            <div class="rb-big w-pin"><svg class="rb-ico" viewBox="0 0 36 36"><use href="#r-pin"/></svg><span>固定到<br>快速访问</span></div>
                            <div class="rb-big w-50 off"><svg class="rb-ico" viewBox="0 0 36 36"><use href="#r-copy"/></svg><span>复制</span></div>
                            <div class="rb-big w-50 off"><svg class="rb-ico" viewBox="0 0 36 36"><use href="#r-paste"/></svg><span>粘贴</span></div>
                            <div class="rb-col c-clip off">
                                <div class="rb-row"><svg class="rb-sm" viewBox="0 0 18 18"><path d="M5 1l7 11M13 1L6 12" stroke="#99a" stroke-width="1.4"/><circle cx="5" cy="14" r="2.5" fill="none" stroke="#99a"/><circle cx="13" cy="14" r="2.5" fill="none" stroke="#99a"/></svg><span>剪切</span></div>
                                <div class="rb-row"><svg class="rb-sm" viewBox="0 0 18 18"><rect x="1" y="4" width="16" height="11" fill="#dfe8f2" stroke="#a8b8c8"/><path d="M4 7l2 5M7 7l2 5" stroke="#889"/></svg><span>复制路径</span></div>
                                <div class="rb-row"><svg class="rb-sm" viewBox="0 0 18 18"><rect x="3" y="3" width="12" height="14" fill="#dfe3e8" stroke="#889"/><rect x="6" y="1" width="6" height="3" fill="#aab"/><path d="M7 13l4-5" stroke="#557"/></svg><span>粘贴快捷方式</span></div>
                            </div>
                        </div><div class="rb-label">剪贴板</div></div>
                        <div class="rb-group g2"><div class="rb-tools">
                            <div class="rb-big w-move off"><svg class="rb-ico" viewBox="0 0 36 36"><use href="#r-move"/></svg><span>移动到</span><i class="caret under"></i></div>
                            <div class="rb-big w-50 off"><svg class="rb-ico" viewBox="0 0 36 36"><use href="#r-copyto"/></svg><span>复制到</span><i class="caret under"></i></div>
                            <div class="rb-big w-del slate"><svg class="rb-ico" viewBox="0 0 36 40"><use href="#r-del"/></svg><span>删除</span><i class="caret under dark"></i></div>
                            <div class="rb-big w-50 off pale"><svg class="rb-ico" viewBox="0 0 36 36"><use href="#r-ren"/></svg><span>重命名</span></div>
                        </div><div class="rb-label">组织</div></div>
                        <div class="rb-group g3"><div class="rb-tools">
                            <div class="rb-big w-new"><svg class="rb-ico" viewBox="0 0 36 36"><use href="#r-newf"/></svg><span>新建<br>文件夹</span></div>
                            <div class="rb-col c-new">
                                <div class="rb-row"><svg class="rb-sm" viewBox="0 0 18 18"><rect x="1" y="1" width="9" height="9" fill="#cfe8d0" stroke="#778"/><path d="M7 6h9v11H7z" fill="#fff" stroke="#778"/></svg><span>新建项目</span><i class="caret"></i></div>
                                <div class="rb-row"><svg class="rb-sm" viewBox="0 0 18 18"><path d="M5 3h7l3 3v11H5z" fill="#fff" stroke="#667"/><path d="M1 6h5M3 4v5" stroke="#667"/></svg><span>轻松访问</span><i class="caret"></i></div>
                            </div>
                        </div><div class="rb-label">新建</div></div>
                        <div class="rb-group g4"><div class="rb-tools">
                            <div class="rb-big w-prop"><svg class="rb-ico" viewBox="0 0 36 36"><use href="#r-prop"/></svg><span>属性</span><i class="caret under dark"></i></div>
                            <div class="rb-col c-open open-col">
                                <div class="rb-row off"><svg class="rb-sm" viewBox="0 0 18 18"><path d="M2 1h9v16H2z" fill="#cdd8e6"/><path d="M3 3h3M3 6h3M3 9h3" stroke="#889"/><path d="M13 7l4 4h-3v6h-2v-6H9z" fill="#8aa8c8"/></svg><span>打开</span><i class="caret pale-caret"></i></div>
                                <div class="rb-row off"><svg class="rb-sm" viewBox="0 0 18 18"><path d="M3 1h9l3 3v13H3z" fill="#fff" stroke="#bbc"/><path d="M6 14L14 4" stroke="#aab"/></svg><span>编辑</span></div>
                                <div class="rb-row"><svg class="rb-sm" viewBox="0 0 18 18"><path d="M2 1h7v12H2z" fill="#f8d97e"/><circle cx="11" cy="12" r="5" fill="#fff" stroke="#4a9a4a" stroke-width="1.5"/><path d="M11 9v3h3" stroke="#444" fill="none"/></svg><span>历史记录</span></div>
                            </div>
                        </div><div class="rb-label">打开</div></div>
                        <div class="rb-group g5"><div class="rb-tools">
                            <div class="rb-col c-sel">
                                <div class="rb-row"><svg class="rb-sm" viewBox="0 0 18 18"><path d="M1 1h16v16H1z" fill="#52b4ea" stroke="#2a7cc0"/><path d="M9 1v16M1 9h16" stroke="#fff" stroke-width="1.5"/></svg><span>全部选择</span></div>
                                <div class="rb-row"><svg class="rb-sm" viewBox="0 0 18 18"><path d="M1 1h7v7H1zM10 1h7v7h-7zM1 10h7v7H1zM10 10h7v7h-7z" fill="#fff" stroke="#aaa"/></svg><span>全部取消</span></div>
                                <div class="rb-row"><svg class="rb-sm" viewBox="0 0 18 18"><path d="M1 1h7v7H1zM1 10h7v7H1z" fill="#fff" stroke="#6a9ac8"/><path d="M10 1h7v7h-7zM10 10h7v7h-7z" fill="#52a4e0" stroke="#3a84c0"/></svg><span>反向选择</span></div>
                            </div>
                        </div><div class="rb-label">选择</div></div>
                    </div>
                    <div class="addr-row">
                        <div class="nav-btns">
                            <svg class="nav-back" viewBox="0 0 20 16"><path d="M17 8H4M9 3L4 8l5 5" fill="none" stroke="#6a6a6a" stroke-width="1.6"/></svg>
                            <svg class="nav-fwd" viewBox="0 0 20 16"><path d="M3 8h13M11 3l5 5-5 5" fill="none" stroke="#cfcfcf" stroke-width="1.6"/></svg>
                            <svg class="nav-down" viewBox="0 0 20 16"><path d="M6 6l4 4 4-4" fill="none" stroke="#777" stroke-width="1.5"/></svg>
                            <svg class="nav-up" viewBox="0 0 20 16"><path d="M10 15V2M5 7l5-5 5 5" fill="none" stroke="#555" stroke-width="1.6"/></svg>
                        </div>
                        <div class="addr-box">
                            <svg class="addr-folder" viewBox="0 0 14 24"><path d="M2 1h10v20H6l-4-3z" fill="#f6d677"/></svg>
                            <span class="addr-more">«</span>
                            <span class="addr-path">idea2018+navicat+mysql5.7+jdk8</span>
                            <svg class="addr-sep" viewBox="0 0 12 12"><path d="M4 2l4 4-4 4" fill="none" stroke="#777" stroke-width="1.3"/></svg>
                            <div class="crumb"><span class="crumb-name">注册机</span><span class="crumb-drop"><svg viewBox="0 0 10 8" width="10" height="8"><path d="M1 2l4 4 4-4" fill="none" stroke="#668" stroke-width="1.3"/></svg></span></div>
                            <span class="addr-cur">Crack</span>
                            <svg class="addr-chev" viewBox="0 0 12 8" width="12" height="8"><path d="M1 1l5 5 5-5" fill="none" stroke="#555" stroke-width="1.3"/></svg>
                            <div class="addr-refresh"><svg viewBox="0 0 16 20" width="16" height="20"><path d="M4 4a7 7 0 1 0 8 0M8 1L4 4l4 3" fill="none" stroke="#888" stroke-width="1.6"/></svg></div>
                        </div>
                        <div class="search-box"><svg class="search-ico" viewBox="0 0 16 16"><circle cx="10" cy="6" r="4.5" fill="none" stroke="#777"/><path d="M7 9.5L2 15" stroke="#777"/></svg><span>在 Crack 中搜索</span></div>
                    </div>
                    <div class="win-main">
                        <div class="side">
                            <div class="side-list">
                                <div class="s-row lv1"><svg viewBox="0 0 20 20" width="20" height="20"><path d="M4 16c-4 0-4-6 0-6 1-6 9-6 10-2 5-1 6 8 1 8z" fill="#2f82d8"/></svg><span>WPS网盘</span></div>
                                <div class="s-row lv1 gap1"><svg viewBox="0 0 20 20" width="20" height="20"><path d="M6 2l12 4v8L6 11z" fill="#3f9be0"/><path d="M0 16l10-2 6 2-10 2z" fill="#c8d0d8"/></svg><span>此电脑</span></div>
                                <div class="s-row lv2"><svg viewBox="0 0 20 20" width="20" height="20"><path d="M10 1l8 4v10l-8 4-8-4V5z" fill="#9adfe0"/><path d="M10 9l8-4v10l-8 4z" fill="#1a9ac8"/></svg><span>3D 对象</span></div>
                                <div class="s-row lv2"><svg viewBox="0 0 20 20" width="20" height="20"><rect x="2" y="1" width="16" height="18" fill="#4a5a72" stroke="#333"/><path d="M6 4h8v12H6z" fill="#c08a4a"/><path d="M3 3h2M3 6h2M3 9h2M3 12h2M3 15h2M15 3h2M15 6h2M15 9h2M15 12h2M15 15h2" stroke="#eee"/></svg><span>视频</span></div>
                                <div class="s-row lv2"><svg viewBox="0 0 20 20" width="20" height="20"><rect x="1" y="3" width="18" height="14" fill="#fff" stroke="#8899a8"/><path d="M3 5h14v6H3z" fill="#aac4de"/><path d="M3 15v-3l7-2 7 3v2z" fill="#56687e"/></svg><span>图片</span></div>
                                <div class="s-row lv2"><svg viewBox="0 0 20 20" width="20" height="20"><path d="M3 1h11l3 3v15H3z" fill="#fff" stroke="#99a"/><path d="M6 5h5M6 8h8M6 11h8M6 14h8" stroke="#5a8ab8"/></svg><span>文档</span></div>
                                <div class="s-row lv2"><svg viewBox="0 0 20 20" width="20" height="20"><path d="M6 1h8v8h5l-9 10L1 9h5z" fill="#2a84dc"/></svg><span>下载</span></div>
                                <div class="s-row lv2"><svg viewBox="0 0 20 20" width="20" height="20"><path d="M9 1v13" stroke="#2a84dc" stroke-width="2"/><ellipse cx="7" cy="15" rx="4" ry="3" fill="#2a84dc"/><path d="M10 1c2 4 6 4 5 9-1-3-3-4-5-4z" fill="#2a84dc"/></svg><span>音乐</span></div>
                                <div class="s-row lv2"><svg viewBox="0 0 20 20" width="20" height="20"><rect y="3" width="20" height="14" fill="#1a86e0"/><path d="M0 15h20v2H0z" fill="#146ab8"/></svg><span>桌面</span></div>
                                <div class="s-row lv2"><svg viewBox="0 0 20 20" width="20" height="20"><path d="M3 16l3-4h10l3 4v3H3z" fill="#c8ced6"/><path d="M1 2h4v4H1zM6 2h4v4H6zM1 7h4v4H1zM6 7h4v4H6z" fill="#18a4b8"/></svg><span>OS (C:)</span></div>
                                <div class="s-row lv2 s-on"><svg viewBox="0 0 20 20" width="20" height="20"><path d="M1 14l12-4 6 3-1 4-4 1-13-2z" fill="#d6dadf"/><path d="M1 14l13 2v2l-13-2z" fill="#444"/></svg><span>新加卷 (D:)</span></div>
                                <div class="s-row lv2"><svg viewBox="0 0 20 20" width="20" height="20"><path d="M1 14l12-4 6 3-1 4-4 1-13-2z" fill="#d6dadf"/><path d="M1 14l13 2v2l-13-2z" fill="#444"/></svg><span>新加卷 (E:)</span></div>
                                <div class="s-row lv2"><svg viewBox="0 0 20 20" width="20" height="20"><path d="M1 14l12-4 6 3-1 4-4 1-13-2z" fill="#d6dadf"/><path d="M1 14l13 2v2l-13-2z" fill="#444"/></svg><span>新加卷 (F:)</span></div>
                                <div class="s-row lv1 gap2"><svg viewBox="0 0 20 20" width="20" height="20"><circle cx="12" cy="8" r="7" fill="#5aa8e0"/><path d="M1 9l8-2 7 4-7 5-8-3z" fill="#2a74c0"/></svg><span>网络</span></div>
                            </div>
                            <div class="side-scroll">
                                <svg viewBox="0 0 12 8" width="12" height="8"><path d="M1 7l5-5 5 5" fill="none" stroke="#333" stroke-width="2"/></svg>
                                <div class="scroll-thumb"></div>
                                <svg viewBox="0 0 12 8" width="12" height="8"><path d="M1 1l5 5 5-5" fill="none" stroke="#333" stroke-width="2"/></svg>
                            </div>
                        </div>
                        <div class="list">
                            <svg class="sort-mark" viewBox="0 0 10 6" width="10" height="6"><path d="M1 5l4-4 4 4" fill="none" stroke="#999"/></svg>
                            <div class="list-head">
                                <div class="col col-name">名称</div>
                                <div class="col col-date">修改日期</div>
                                <div class="col col-type">类型</div>
                                <div class="col col-size">大小</div>
                            </div>
                            <div class="list-empty">此文件夹为空。</div>
                        </div>
                    </div>
                    <div class="win-status">
                        <span class="status-text">0 个项目</span>
                        <div class="views"><span class="view-on"><svg viewBox="0 0 24 24" width="24" height="24"><use href="#v-details"/></svg></span><svg viewBox="0 0 20 16" width="18" height="14"><use href="#v-large"/></svg></div>
                    </div>
                </div>

                <div class="edge-handle"></div>
                <div class="thumb-stack"><div class="thumb-dark"><span></span></div><div class="thumb-gray"></div></div>
            </div>

            <div class="taskbar">
                <div class="tb-start"><svg viewBox="0 0 20 20" width="20" height="20"><path d="M0 3l9-1v7.500H0zM10 2l10-2v9.500H10zM0 10.500h9V18l-9-1zM10 10.500h10V20l-10-2z" fill="#000"/></svg></div>
                <div class="tb-search"><svg viewBox="0 0 24 24" width="24" height="24"><circle cx="14" cy="9" r="7" fill="none" stroke="#111" stroke-width="1.8"/><path d="M9 14l-7 8" stroke="#111" stroke-width="1.8"/></svg><span>在这里输入你要搜索的内容</span></div>
                <div class="tb-btn w-cortana"><svg viewBox="0 0 22 22" width="22" height="22"><circle cx="11" cy="11" r="8.500" fill="none" stroke="#111" stroke-width="2.600"/></svg></div>
                <div class="tb-btn w-view"><svg viewBox="0 0 24 24" width="24" height="24"><path d="M3 3h12M3 21h12M3 7h12v10H3z" fill="none" stroke="#111" stroke-width="1.600"/><path d="M19 4v2M19 9v6M19 18v2M22 8v8" stroke="#111" stroke-width="1.600"/></svg></div>
                <div class="tb-btn w-dell"><svg viewBox="0 0 60 60" width="32" height="32"><use href="#i-dell"/></svg></div>
                <div class="tb-app a-wechat"><svg viewBox="0 0 60 60" width="34" height="34"><use href="#i-wechat"/></svg></div>
                <div class="tb-app a-open"><svg viewBox="0 0 60 60" width="34" height="34"><use href="#i-explorer"/></svg></div>
                <div class="tb-app"><svg viewBox="0 0 60 60" width="34" height="34"><use href="#i-baidu"/></svg></div>
                <div class="tb-app"><svg viewBox="0 0 60 60" width="34" height="34"><use href="#i-sql"/></svg></div>
                <div class="tb-app"><svg viewBox="0 0 60 60" width="34" height="34"><use href="#i-ij"/></svg></div>
                <div class="tb-app"><svg viewBox="0 0 60 60" width="34" height="34"><use href="#i-disc"/></svg></div>

                <div class="tray">
                    <svg class="tr-cloud" viewBox="0 0 60 60" width="24" height="24"><use href="#h-cloud"/></svg>
                    <span class="tr-temp">25°C</span>
                    <span class="tr-sky">阴</span>
                    <div class="tr-slot s30"><svg viewBox="0 0 16 10" width="16" height="10"><path d="M1 9l7-7 7 7" fill="none" stroke="#222" stroke-width="1.500"/></svg></div>
                    <div class="tr-slot s30"><svg viewBox="0 0 60 60" width="22" height="22"><use href="#t-pipe"/></svg></div>
                    <div class="tr-slot s30"><svg viewBox="0 0 60 60" width="22" height="22"><use href="#t-shield"/></svg></div>
                    <div class="tr-slot s30"><svg viewBox="0 0 60 60" width="20" height="20"><use href="#t-batt"/></svg></div>
                    <div class="tr-slot s32"><svg viewBox="0 0 60 60" width="20" height="20"><use href="#t-wifi"/></svg></div>
                    <div class="tr-slot s24"><svg viewBox="0 0 60 60" width="20" height="20"><use href="#t-spk"/></svg></div>
                    <div class="tr-slot s36 tr-lang">英</div>
                    <div class="tr-slot s36"><span class="tr-pin">拼</span></div>
                    <div class="tr-clock"><div>15:45</div><div>2022/4/25</div></div>
                    <div class="tr-note"><svg viewBox="0 0 22 22" width="22" height="22"><path d="M1 1h20v15H7l-6 5z" fill="#111"/><path d="M5 6h12M5 10h12" stroke="#fff" stroke-width="1.500"/></svg><span class="tr-badge">3</span></div>
                </div>
            </div>
        </div>
    </div>

    <div class="sogou">
        <svg class="sg-logo" viewBox="0 0 30 32" width="30" height="32"><path d="M5 3l20-3q4 0 4 4l1 21q0 3-3 3L7 32q-4 0-4-4L1 7q0-3 4-4z" fill="#f05a1e"/><path d="M23 9c-5-3-13-2-13 3s13 3 12 9c-1 4-9 5-14 2" fill="none" stroke="#fff" stroke-width="4.200" stroke-linecap="round"/></svg>
        <span class="sg-item">中</span>
        <span class="sg-item">°,</span>
        <span class="sg-item"><svg viewBox="0 0 14 22" width="12" height="20"><rect x="4" y="1" width="6" height="12" rx="3" fill="#1273c4"/><path d="M1 9c0 8 12 8 12 0M7 15v5" stroke="#1273c4" stroke-width="1.500" fill="none"/></svg></span>
        <span class="sg-item"><svg viewBox="0 0 16 16" width="15" height="15"><rect x="1" y="1" width="14" height="14" rx="2" fill="none" stroke="#1273c4" stroke-width="1.600"/><path d="M4 5h8M4 8h8M4 11h8" stroke="#1273c4" stroke-width="1.500" stroke-dasharray="2 1"/></svg></span>
        <span class="sg-item"><svg viewBox="0 0 18 18" width="17" height="17"><path d="M1 3l5-2q3 3 6 0l5 2-2 5-2-1v10H5V7L3 8z" fill="#6a84e0"/></svg></span>
    </div>

    <div class="hostbar">
        <div class="ht"><svg viewBox="0 0 60 60"><use href="#h-check"/></svg></div>
        <div class="ht on"><svg viewBox="0 0 60 60"><use href="#i-wechat"/></svg></div>
        <div class="ht on"><svg viewBox="0 0 60 60"><use href="#h-ij"/></svg></div>
        <div class="ht on cur"><svg viewBox="0 0 60 60"><use href="#i-sun"/></svg></div>
        <div class="ht on"><svg viewBox="0 0 60 60"><use href="#h-chrome"/></svg></div>
        <div class="ht on"><svg viewBox="0 0 60 60"><use href="#i-explorer"/></svg></div>
        <div class="ht on"><svg viewBox="0 0 60 60"><use href="#i-navicat"/></svg></div>
        <div class="ht"><svg viewBox="0 0 60 60"><use href="#h-blue"/></svg></div>
        <div class="ht"><svg viewBox="0 0 60 60"><use href="#h-note"/></svg></div>
        <div class="ht"><svg viewBox="0 0 60 60"><use href="#h-rec"/></svg></div>
        <div class="ht"><svg viewBox="0 0 60 60"><use href="#h-cmdc"/></svg></div>
        <div class="ht"><svg viewBox="0 0 60 60"><use href="#h-sync"/></svg></div>
        <div class="ht"><svg viewBox="0 0 60 60"><use href="#h-pen"/></svg></div>
        <div class="ht"><svg viewBox="0 0 60 60"><use href="#h-arc"/></svg></div>
        <div class="ht on"><svg viewBox="0 0 60 60"><use href="#i-qq"/></svg></div>
        <div class="ht"><svg viewBox="0 0 60 60"><use href="#h-bird"/></svg></div>
        <div class="ht on"><svg viewBox="0 0 60 60"><use href="#h-me"/></svg></div>
        <div class="ht on"><svg viewBox="0 0 60 60"><use href="#h-g"/></svg></div>
        <div class="ht on"><svg viewBox="0 0 60 60"><use href="#i-rar"/></svg></div>
        <div class="ht on"><svg viewBox="0 0 60 60"><use href="#h-pc"/></svg></div>
        <div class="ht on"><svg viewBox="0 0 60 60"><use href="#h-term"/></svg></div>
        <div class="ht on"><svg viewBox="0 0 60 60"><use href="#h-rec"/></svg></div>
        <div class="ht on"><svg viewBox="0 0 60 60"><use href="#h-word"/></svg></div>
        <div class="ht on"><svg viewBox="0 0 60 60"><use href="#h-play"/></svg></div>

        <div class="host-tray">
            <svg class="ho-cloud" viewBox="0 0 60 60" width="24" height="24"><use href="#h-cloud"/></svg>
            <span class="ho-temp">29°C</span>
            <span class="ho-sky">阴</span>
            <div class="ho"><svg viewBox="0 0 16 10" width="14" height="9"><path d="M1 9l7-7 7 7" fill="none" stroke="#ddd" stroke-width="1.500"/></svg></div>
            <div class="ho"><svg viewBox="0 0 60 60"><use href="#i-qq"/></svg></div>
            <div class="ho"><svg viewBox="0 0 60 60"><use href="#i-qq"/></svg></div>
            <div class="ho"><svg viewBox="0 0 60 60"><use href="#i-qq"/></svg></div>
            <div class="ho"><svg viewBox="0 0 60 60"><use href="#i-wechat"/></svg></div>
            <div class="ho"><svg viewBox="0 0 60 60"><use href="#h-play"/></svg></div>
            <div class="ho"><svg viewBox="0 0 60 60"><use href="#h-baidup"/></svg></div>
            <div class="ho"><svg viewBox="0 0 60 60"><use href="#h-usb"/></svg></div>
            <div class="ho"><svg viewBox="0 0 60 60"><use href="#h-rec"/></svg></div>
            <div class="ho"><svg viewBox="0 0 60 60"><use href="#h-mic"/></svg></div>
            <div class="ho"><svg viewBox="0 0 60 60"><use href="#h-rcloud"/></svg></div>
            <div class="ho"><svg viewBox="0 0 60 60"><use href="#h-mag"/></svg></div>
            <div class="ho"><svg viewBox="0 0 60 60"><use href="#h-gc"/></svg></div>
            <div class="ho"><svg viewBox="0 0 60 60"><use href="#h-net"/></svg></div>
            <div class="ho"><svg viewBox="0 0 60 60"><use href="#h-spk"/></svg></div>
            <div class="ho ho-lang">中</div>
        </div>
    </div>
</div>
</body>
</html>
```

FILE: styles.css
```css
* {
    box-sizing: border-box;
}

body {
    margin: 0;
    background: #000;
    font-family: "Noto Sans", "Noto Sans CJK SC", sans-serif;
    font-size: 15px;
    color: #333;
}

.sprite {
    position: absolute;
}

.page {
    position: relative;
    width: 2304px;
    height: 1440px;
    overflow: hidden;
    display: flex;
    flex-direction: column;
    background: #000;
}

/* barra de abas do cliente */
.tabbar {
    height: 34px;
    flex: none;
    display: flex;
    align-items: center;
    border-top: 1px solid #3a3a3a;
    border-bottom: 1px solid #2a2a2a;
}

.tab-x {
    width: 33px;
    height: 32px;
    background: #1e1e1e;
    display: flex;
    align-items: center;
    justify-content: center;
}

.tab-plus {
    margin-left: 14px;
}

.drop-btn {
    position: absolute;
    left: 1120px;
    top: 38px;
    width: 64px;
    height: 24px;
    background: #2b2b2b;
    display: flex;
    align-items: center;
    justify-content: center;
}

.stage {
    flex: 1;
    padding: 147px 192px 149px;
    display: flex;
    min-height: 0;
}

.screen {
    flex: 1;
    display: flex;
    flex-direction: column;
    filter: blur(0.45px);
}

.wallpaper {
    position: relative;
    flex: 1;
    overflow: hidden;
    background:
        radial-gradient(ellipse 900px 340px at 1300px -40px, #3a74d2 0%, rgba(58, 116, 210, 0) 100%),
        radial-gradient(ellipse 420px 700px at 1960px 380px, #1a64d4 0%, rgba(26, 100, 212, 0) 100%),
        radial-gradient(ellipse 800px 300px at 1400px 900px, #0b50c6 0%, rgba(11, 80, 198, 0) 100%),
        #063cb0;
}

.streaks {
    position: absolute;
    left: 0;
    top: 0;
    filter: blur(2px);
}

/* ícones da área de trabalho */
.desktop {
    position: relative;
    display: grid;
    grid-template-columns: repeat(5, 95px);
    grid-auto-rows: 123px;
    padding-top: 7px;
}

.d-item {
    display: flex;
    flex-direction: column;
    align-items: center;
}

.row-start {
    grid-column: 1;
}

.d-ico {
    width: 60px;
    height: 60px;
    flex: none;
}

.d-label {
    margin-top: 3px;
    font-size: 15px;
    line-height: 20px;
    color: #fff;
    text-align: center;
    white-space: nowrap;
    text-shadow: 1px 1px 2px rgba(0, 0, 0, 0.8);
}

/* instalador */
.installer {
    position: absolute;
    left: 469px;
    top: 141px;
    width: 85px;
    height: 738px;
    display: flex;
    flex-direction: column;
    overflow: hidden;
    box-shadow: 0 0 8px rgba(0, 0, 0, 0.3);
}

.inst-title {
    height: 40px;
    flex: none;
    background: #fbfcfd;
    display: flex;
    align-items: center;
    gap: 6px;
    padding-left: 8px;
    font-size: 17px;
    color: #888;
    white-space: nowrap;
}

.inst-body {
    flex: 1;
    background: #2f7fb3;
    color: #fff;
    white-space: nowrap;
}

.inst-head {
    font-size: 24px;
    font-weight: 600;
    padding: 33px 0 0 41px;
    line-height: 34px;
}

.inst-sub {
    font-size: 18px;
    padding-left: 41px;
    line-height: 32px;
    color: #d6e6f2;
}

.inst-step {
    height: 41px;
    line-height: 39px;
    padding-left: 41px;
    font-size: 15px;
    color: #d8e8f2;
}

.inst-step:nth-child(3) {
    margin-top: 50px;
}

.inst-step.on {
    background: #176a9d;
    color: #fff;
}

/* janelas do explorador */
.win {
    position: absolute;
    width: 1202px;
    display: flex;
    flex-direction: column;
    background: #fff;
    box-shadow: 0 0 14px rgba(0, 0, 0, 0.35);
}

.win-back {
    left: 659px;
    top: 8px;
    height: 741px;
}

.win-front {
    left: 554px;
    top: 139px;
    height: 742px;
}

.win-title {
    height: 38px;
    flex: none;
    display: flex;
    align-items: center;
    padding-left: 11px;
}

.q-folder,
.q-check,
.q-folder2 {
    width: 18px;
    height: 18px;
    flex: none;
}

.q-sep,
.q-sep2 {
    width: 1px;
    height: 18px;
    background: #aaa;
}

.q-sep {
    margin-left: 7px;
}

.q-check {
    margin-left: 14px;
}

.q-folder2 {
    margin-left: 7px;
}

.q-arrow {
    width: 10px;
    height: 10px;
    margin-left: 9px;
}

.q-sep2 {
    margin-left: 10px;
}

.win-name {
    margin-left: 6px;
    font-size: 15px;
    color: #222;
}

.win-name.muted {
    color: #999;
}

.win-ctrl {
    margin-left: auto;
    margin-right: 2px;
    display: flex;
}

.ctl {
    width: 58px;
    height: 38px;
    display: flex;
    align-items: center;
    justify-content: center;
}

.win-tabs {
    height: 32px;
    flex: none;
    display: flex;
    align-items: flex-start;
    border-bottom: 1px solid #dadbdc;
    font-size: 15px;
}

.t-file {
    width: 70px;
    height: 30px;
    margin-left: 1px;
    background: #0b62a8;
    color: #fff;
    text-align: center;
    line-height: 30px;
}

.t-tab {
    width: 65px;
    height: 31px;
    text-align: center;
    line-height: 31px;
    color: #444;
}

.t-on {
    background: #fff;
    border: 1px solid #dadbdc;
    border-bottom: 0;
    height: 32px;
    color: #222;
}

.t-help {
    margin-left: auto;
    margin-right: 5px;
    height: 31px;
    display: flex;
    align-items: center;
    gap: 12px;
}

.help-q {
    width: 18px;
    height: 20px;
    border-radius: 50%;
    background: #1168b4;
    color: #fff;
    font-size: 14px;
    font-weight: 700;
    text-align: center;
    line-height: 20px;
}

.ribbon {
    height: 122px;
    flex: none;
    display: flex;
    background: #f5f6f7;
    border-bottom: 1px solid #e3e4e5;
    white-space: nowrap;
}

.rb-group {
    display: flex;
    flex-direction: column;
    border-right: 1px solid #eeeff0;
}

.g1 { width: 300px; padding-left: 8px; }
.g2 { width: 216px; padding-left: 3px; }
.g3 { width: 170px; padding-left: 8px; }
.g4 { width: 146px; padding-left: 2px; }
.g5 { width: 102px; padding-left: 12px; border-right: 0; }

.rb-tools {
    height: 101px;
    flex: none;
    display: flex;
}

.rb-label {
    height: 20px;
    margin-left: -8px;
    text-align: center;
    line-height: 18px;
    font-size: 14px;
    color: #666;
}

.g2 .rb-label { margin-left: -3px; }
.g4 .rb-label { margin-left: -2px; }
.g5 .rb-label { margin-left: -12px; }

.rb-big {
    display: flex;
    flex-direction: column;
    align-items: center;
    padding-top: 9px;
    text-align: center;
    line-height: 20px;
    font-size: 14.500px;
    color: #333;
}

.rb-ico {
    width: 36px;
    height: 36px;
    flex: none;
    margin-bottom: 5px;
}

.w-pin { width: 64px; }
.w-50 { width: 50px; }
.w-move { width: 52px; }
.w-del { width: 48px; margin-left: 8px; }
.w-new { width: 52px; }
.w-prop { width: 48px; }

.off,
.off span {
    color: #9a9ea3;
}

.red { color: #c8192b; }
.red span { color: #333; }
.slate { color: #65758e; }
.slate span { color: #333; }
.blue { color: #1a8ad8; }
.pale { color: #a8b4c0; }

.rb-col {
    padding-top: 4px;
}

.c-clip { margin-left: 5px; }
.c-new { margin-left: 2px; }
.c-open { margin-left: 6px; }

.open-col {
    padding-top: 5px;
}

.open-col .rb-row {
    height: 29px;
}

.rb-row {
    height: 26.500px;
    display: flex;
    align-items: center;
    gap: 4px;
    font-size: 14.500px;
}

.rb-row span {
    margin-top: -3px;
}

.rb-sm {
    width: 18px;
    height: 18px;
    flex: none;
}

.caret {
    width: 0;
    height: 0;
    margin-left: 5px;
    border: 3px solid transparent;
    border-top: 4px solid #444;
    border-bottom: 0;
}

.caret.under {
    margin: 1px 0 0;
    border-top-color: #bbb;
}

.caret.dark {
    border-top-color: #333;
}

.caret.pale-caret {
    border-top-color: #bbb;
}

/* barra de endereço */
.addr-row {
    height: 55px;
    flex: none;
    display: flex;
    padding-top: 8px;
    padding-bottom: 9px;
    border-bottom: 1px solid #c9c9c9;
}

.nav-btns {
    width: 135px;
    flex: none;
    display: flex;
    align-items: center;
}

.nav-btns svg {
    width: 20px;
    height: 16px;
    flex: none;
}

.nav-back { margin-left: 14px; }
.nav-fwd { margin-left: 19px; }
.nav-down { margin-left: 10px; }
.nav-up { margin-left: 6px; }

.addr-box {
    width: 700px;
    flex: none;
    display: flex;
    align-items: stretch;
    border: 1px solid #dcdcdc;
    white-space: nowrap;
}

.win-back .addr-box {
    margin-left: 135px;
}

.addr-folder {
    width: 14px;
    height: 24px;
    margin: 6px 0 0 4px;
    flex: none;
}

.addr-more {
    width: 12px;
    margin-left: 9px;
    align-self: center;
    color: #777;
    font-size: 14px;
}

.addr-path {
    width: 248px;
    margin: -3px 0 0 7px;
    align-self: center;
    font-size: 16px;
    color: #222;
}

.addr-sep {
    width: 12px;
    height: 12px;
    margin-left: 8px;
    align-self: center;
}

.crumb {
    margin-left: 3px;
    display: flex;
    background: #cde6f9;
    border: 1px solid #a3d2f2;
    align-items: center;
}

.crumb-name {
    width: 53px;
    margin-top: -2px;
    text-align: center;
    font-size: 15px;
    color: #222;
}

.crumb-drop {
    width: 18px;
    height: 100%;
    display: flex;
    align-items: center;
    justify-content: center;
    border-left: 1px solid #a3d2f2;
}

.addr-cur {
    margin: -3px 0 0 4px;
    align-self: center;
    font-size: 15px;
    color: #222;
}

.addr-chev {
    margin-left: auto;
    margin-right: 15px;
    align-self: center;
}

.addr-refresh {
    width: 43px;
    flex: none;
    display: flex;
    align-items: center;
    justify-content: center;
    border-left: 1px solid #e2e2e2;
}

.search-box {
    width: 341px;
    margin-left: 13px;
    flex: none;
    display: flex;
    align-items: center;
    gap: 9px;
    padding-left: 17px;
    border: 1px solid #e0e0e0;
    color: #777;
    font-size: 15px;
    white-space: nowrap;
}

.search-box span {
    margin-top: -3px;
}

.search-ico {
    width: 16px;
    height: 16px;
    flex: none;
}

/* conteúdo */
.win-main {
    flex: 1;
    min-height: 0;
    display: flex;
}

.side {
    width: 196px;
    flex: none;
    display: flex;
}

.side-list {
    width: 176px;
    flex: none;
    padding: 11px 0 0 1px;
}

.s-row {
    height: 30px;
    display: flex;
    align-items: center;
    gap: 5px;
    font-size: 15px;
    color: #222;
    white-space: nowrap;
}

.s-row span {
    margin-top: -3px;
}

.lv1 { padding-left: 31px; }
.lv2 { padding-left: 40px; gap: 6px; }
.gap1 { margin-top: 11px; }
.gap2 { margin-top: 9px; }

.s-on {
    background: #cdcdcd;
}

.side-scroll {
    width: 20px;
    flex: none;
    display: flex;
    flex-direction: column;
    align-items: center;
    background: #f1f1f1;
    padding-top: 8px;
}

.scroll-thumb {
    width: 100%;
    height: 248px;
    margin-top: 178px;
    background: #c1c1c1;
}

.side-scroll svg:last-child {
    margin-top: 5px;
}

.list {
    position: relative;
    flex: 1;
}

.sort-mark {
    position: absolute;
    left: 176px;
    top: 1px;
}

.list-head {
    height: 34px;
    display: flex;
    align-items: center;
    color: #555;
    font-size: 14.500px;
}

.col {
    height: 100%;
    display: flex;
    align-items: center;
    padding-left: 8px;
    padding-bottom: 3px;
    border-right: 1px solid #eeeeee;
}

.col-name { width: 344px; padding-left: 26px; }
.col-date { width: 180px; }
.col-type { width: 151px; }
.col-size { padding-left: 6px; border-right: 0; }

.list-empty {
    margin-top: 18px;
    text-align: center;
    line-height: 20px;
    font-size: 14.500px;
    color: #666;
}

.win-status {
    height: 30px;
    flex: none;
    display: flex;
    align-items: center;
    padding: 0 11px 0 18px;
    font-size: 14.500px;
    color: #444;
}

.status-text {
    margin-top: -3px;
}

.views {
    margin-left: auto;
    display: flex;
    align-items: center;
    gap: 5px;
}

.view-on {
    width: 27px;
    height: 29px;
    display: flex;
    align-items: center;
    justify-content: center;
    background: #c5e6f5;
    border: 1px solid #6fb0cf;
}

.upload-btn {
    position: absolute;
    left: 997px;
    top: 28px;
    width: 131px;
    height: 32px;
    display: flex;
    border: 1px solid #4ea8dc;
    border-radius: 3px;
    overflow: hidden;
}

.up-logo {
    width: 38px;
    background: #2a9be8;
    display: flex;
    align-items: center;
    justify-content: center;
}

.up-text {
    flex: 1;
    background: #c4e8f8;
    color: #74b8dc;
    font-size: 15px;
    text-align: center;
    line-height: 28px;
}

.edge-handle {
    position: absolute;
    right: 0;
    top: 245px;
    width: 12px;
    height: 74px;
    background: #1c2632;
    border-radius: 4px 0 0 4px;
}

.thumb-stack {
    position: absolute;
    right: 0;
    bottom: 0;
    display: flex;
    height: 76px;
}

.thumb-dark {
    width: 57px;
    background: #17252a;
    display: flex;
    align-items: center;
    justify-content: center;
}

.thumb-dark span {
    width: 36px;
    height: 36px;
    background: #2d3336;
    border-radius: 4px;
}

.thumb-gray {
    width: 20px;
    background: #5c6c6a;
}

/* barra de tarefas remota */
.taskbar {
    height: 49px;
    flex: none;
    display: flex;
    align-items: stretch;
    background: #cfdae7;
}

.tb-start {
    width: 61px;
    background: #c6d2e2;
    display: flex;
    align-items: center;
    justify-content: center;
}

.tb-search {
    width: 428px;
    background: #fff;
    display: flex;
    align-items: center;
    gap: 12px;
    padding-left: 12px;
    font-size: 19px;
    color: #444;
    white-space: nowrap;
}

.tb-btn {
    display: flex;
    align-items: center;
    justify-content: center;
}

.w-cortana { width: 60px; }
.w-view { width: 58px; }
.w-dell { width: 68px; }

.tb-app {
    position: relative;
    width: 62px;
    display: flex;
    align-items: center;
    justify-content: center;
}

.tb-app::after {
    content: "";
    position: absolute;
    bottom: 0;
    left: 5px;
    right: 6px;
    height: 3px;
    background: #1a5f9e;
}

.a-wechat {
    background: #efb891;
}

.a-wechat::after {
    left: 0;
    right: 0;
    background: #e8701e;
}

.a-open {
    width: 61px;
    background: #e3eaf3;
}

.a-open::after {
    left: 0;
    right: 0;
}

.tray {
    margin-left: auto;
    padding-right: 20px;
    display: flex;
    align-items: center;
    white-space: nowrap;
    color: #222;
}

.tr-temp {
    margin-left: 10px;
    font-size: 18px;
}

.tr-sky {
    margin: 0 12px 0 11px;
    font-size: 18px;
}

.tr-slot {
    height: 100%;
    display: flex;
    align-items: center;
    justify-content: center;
}

.s24 { width: 24px; }
.s30 { width: 30px; }
.s32 { width: 32px; }
.s36 { width: 36px; }

.tr-lang {
    font-size: 18px;
}

.tr-pin {
    width: 20px;
    height: 22px;
    border: 1px solid #333;
    background: #fff;
    font-size: 14px;
    text-align: center;
    line-height: 20px;
}

.tr-clock {
    width: 102px;
    text-align: center;
    font-size: 15px;
    line-height: 23px;
}

.tr-note {
    position: relative;
    width: 42px;
    height: 100%;
    display: flex;
    align-items: center;
    justify-content: center;
}

.tr-badge {
    position: absolute;
    left: 22px;
    top: 22px;
    width: 20px;
    height: 20px;
    border: 1px solid #555;
    border-radius: 50%;
    font-size: 13px;
    font-weight: 700;
    text-align: center;
    line-height: 18px;
}

/* barra do sogou */
.sogou {
    position: absolute;
    left: 2151px;
    top: 1157px;
    width: 153px;
    height: 25px;
    display: flex;
    align-items: center;
    background: #eff3f8;
    padding-left: 33px;
    color: #1273c4;
    font-weight: 700;
    font-size: 15px;
}

.sg-logo {
    position: absolute;
    left: 0;
    top: -4px;
}

.sg-item {
    width: 24px;
    display: flex;
    align-items: center;
    justify-content: center;
}

/* barra de tarefas local */
.hostbar {
    height: 31px;
    flex: none;
    display: flex;
    align-items: stretch;
    padding-left: 0;
    margin-left: -15px;
    border-top: 1px solid #3c3c3c;
    background: linear-gradient(90deg, #1c2c38 0%, #262430 15%, #341d24 45%, #341b20 60%, #2a1b1f 80%, #1c1c20 100%);
}

.ht {
    position: relative;
    width: 37px;
    flex: none;
    display: flex;
    align-items: center;
    justify-content: center;
}

.ht svg {
    width: 22px;
    height: 22px;
}

.ht.on::after {
    content: "";
    position: absolute;
    left: 4px;
    right: 5px;
    bottom: 0;
    height: 2px;
    background: #5a9ed4;
}

.ht.cur {
    background: #4a4a50;
}

.host-tray {
    margin-left: auto;
    padding-right: 4px;
    display: flex;
    align-items: center;
    color: #e8e8e8;
    white-space: nowrap;
}

.ho-temp {
    margin-left: 8px;
    font-size: 15px;
}

.ho-sky {
    margin: 0 4px 0 8px;
    font-size: 15px;
}

.ho {
    width: 24px;
    display: flex;
    align-items: center;
    justify-content: center;
}

.ho svg {
    width: 19px;
    height: 19px;
}

.ho:first-of-type svg {
    width: 14px;
    height: 9px;
}

.ho-lang {
    font-size: 15px;
}
```
